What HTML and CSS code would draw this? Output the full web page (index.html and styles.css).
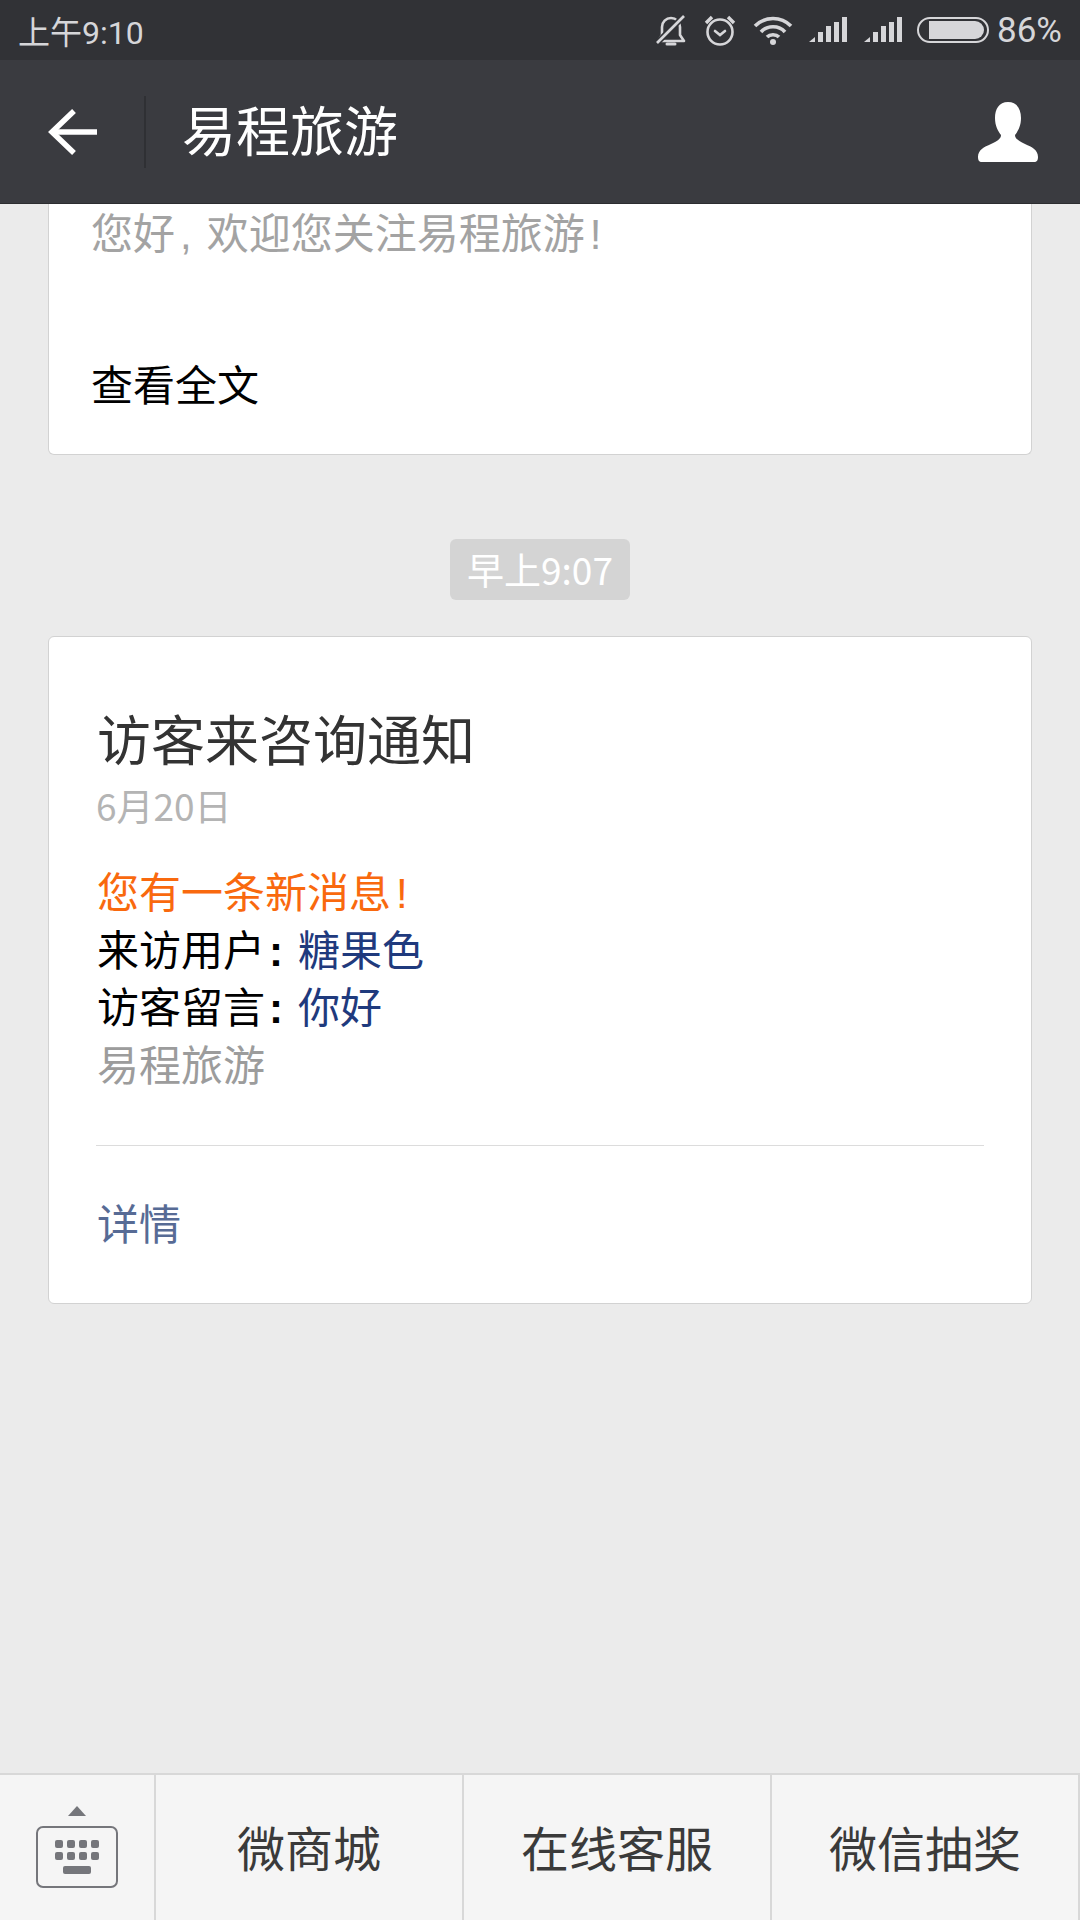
FILE: index.html
```html
<!DOCTYPE html>
<html lang="zh-CN">
<head>
    <meta charset="UTF-8">
    <title>易程旅游</title>
    <link rel="stylesheet" href="styles.css">
</head>
<body>
    <div class="status-bar">
        <span class="status-time">上午9:10</span>
        <div class="status-icons">
            <svg class="icon-bell" width="32" height="32" viewBox="0 0 32 32" fill="none" stroke="#d6d6d9" stroke-width="2.6">
                <path d="M3 27H29L25 21V13C25 8 21 4 16 4C11 4 7 8 7 13V21Z" stroke-linejoin="round"/>
                <path d="M12 30H20" stroke-width="3" stroke-linecap="round"/>
                <path d="M2 29L29 2" stroke="#313236" stroke-width="6"/>
                <path d="M2 29L29 2"/>
            </svg>
            <svg class="icon-alarm" width="32" height="32" viewBox="0 0 32 32" fill="none" stroke="#d6d6d9" stroke-width="2.6">
                <circle cx="16" cy="18" r="12.5"/>
                <path d="M11 17L16 21L21 17" stroke-linecap="round"/>
                <path d="M2 9L8 3M30 9L24 3" stroke-width="3.4"/>
            </svg>
            <svg class="icon-wifi" width="40" height="30" viewBox="0 0 40 30" fill="none" stroke="#d6d6d9" stroke-width="3.6">
                <path d="M2 11C12 1 28 1 38 11"/>
                <path d="M8 17C14 10 26 10 32 17"/>
                <path d="M14 22C17 19 23 19 26 22"/>
                <circle cx="20" cy="27" r="3" fill="#d6d6d9" stroke="none"/>
            </svg>
            <svg class="icon-signal" width="38" height="26" viewBox="0 0 38 26" fill="#d6d6d9">
                <path d="M0 25L6 20V25Z"/>
                <rect x="9" y="15" width="5" height="10"/>
                <rect x="17" y="9" width="5" height="16"/>
                <rect x="25" y="5" width="5" height="20"/>
                <rect x="33" y="0" width="5" height="25"/>
            </svg>
            <svg class="icon-signal" width="38" height="26" viewBox="0 0 38 26" fill="#d6d6d9">
                <path d="M0 25L6 20V25Z"/>
                <rect x="9" y="15" width="5" height="10"/>
                <rect x="17" y="9" width="5" height="16"/>
                <rect x="25" y="5" width="5" height="20"/>
                <rect x="33" y="0" width="5" height="25"/>
            </svg>
            <div class="battery"><div class="battery-fill"></div></div>
            <span class="status-pct">86%</span>
        </div>
    </div>

    <div class="nav-bar">
        <svg class="nav-back" width="50" height="48" viewBox="0 0 50 48" fill="none" stroke="#fff" stroke-width="5.5">
            <path d="M49 24H4"/>
            <path d="M26 3L4 24L26 45"/>
        </svg>
        <div class="nav-sep"></div>
        <div class="nav-title">易程旅游</div>
        <svg class="nav-user" width="62" height="60" viewBox="0 0 62 60" fill="#fff">
            <path d="M31 0C40 0 44 7 44 16C44 24 41 29 38 33C38 37 42 39 48 42C55 45 61 48 61 55C61 58 60 60 57 60H5C2 60 1 58 1 55C1 48 7 45 14 42C20 39 24 37 24 33C21 29 18 24 18 16C18 7 22 0 31 0Z"/>
        </svg>
    </div>

    <div class="chat">
        <div class="card card-top">
            <p class="top-greeting">您好<span class="comma">,</span>欢迎您关注易程旅游<span class="bang">!</span></p>
            <p class="top-more">查看全文</p>
        </div>

        <div class="time-row"><span class="time-pill">早上9:07</span></div>

        <div class="card card-notice">
            <h2 class="notice-title">访客来咨询通知</h2>
            <div class="notice-date">6月20日</div>
            <div class="notice-body">
                <div class="line-orange">您有一条新消息<span class="bang">!</span></div>
                <div>来访用户<span class="colon">:</span><span class="line-blue">糖果色</span></div>
                <div>访客留言<span class="colon">:</span><span class="line-blue">你好</span></div>
                <div class="line-grey">易程旅游</div>
            </div>
            <div class="notice-link">详情</div>
        </div>
    </div>

    <div class="menu-bar">
        <div class="menu-keyboard">
            <svg width="84" height="86" viewBox="0 0 84 86" fill="#75767b">
                <path d="M33 12L42 2L51 12Z"/>
                <rect x="2" y="23" width="80" height="60" rx="6" fill="none" stroke="#75767b" stroke-width="2"/>
                <rect x="20" y="36" width="8" height="8" rx="2"/>
                <rect x="32" y="36" width="8" height="8" rx="2"/>
                <rect x="44" y="36" width="8" height="8" rx="2"/>
                <rect x="56" y="36" width="8" height="8" rx="2"/>
                <rect x="20" y="48" width="8" height="8" rx="2"/>
                <rect x="32" y="48" width="8" height="8" rx="2"/>
                <rect x="44" y="48" width="8" height="8" rx="2"/>
                <rect x="56" y="48" width="8" height="8" rx="2"/>
                <rect x="28" y="62" width="28" height="8" rx="2"/>
            </svg>
        </div>
        <div class="menu-item">微商城</div>
        <div class="menu-item">在线客服</div>
        <div class="menu-item">微信抽奖</div>
    </div>
</body>
</html>
```

FILE: styles.css
```css
html, body {
    margin: 0;
    padding: 0;
}
body {
    width: 1080px;
    height: 1920px;
    display: flex;
    flex-direction: column;
    overflow: hidden;
    background-color: #ebebeb;
    font-family: "Noto Sans CJK SC", "Roboto", sans-serif;
}

/* status bar */
.status-bar {
    height: 60px;
    flex: none;
    display: flex;
    justify-content: space-between;
    align-items: center;
    padding: 0 18px;
    background-color: #313236;
    color: #d6d6d9;
}
.status-time {
    font-family: "Roboto", "Noto Sans CJK SC", sans-serif;
    font-size: 32px;
}
.status-pct {
    font-family: "Roboto", sans-serif;
    font-size: 35px;
}
.status-icons {
    display: flex;
    align-items: center;
}
.icon-bell {
    margin-right: 17px;
}
.icon-alarm {
    margin-right: 17px;
}
.icon-wifi {
    margin-right: 16px;
}
.icon-signal {
    margin-right: 17px;
}
.battery {
    width: 72px;
    height: 26px;
    box-sizing: border-box;
    border: 2px solid #d6d6d9;
    border-radius: 13px;
    padding: 2px 3px 2px 10px;
    margin-left: -2px;
    margin-right: 8px;
}
.battery-fill {
    height: 100%;
    background-color: #d6d6d9;
    border-radius: 0 9px 9px 0;
}

/* title bar */
.nav-bar {
    height: 144px;
    flex: none;
    box-sizing: border-box;
    display: flex;
    align-items: center;
    padding-left: 48px;
    background-color: #3a3b40;
    border-bottom: 1px solid #2c2d30;
}
.nav-sep {
    width: 2px;
    height: 72px;
    margin-left: 46px;
    background-color: #2f3034;
}
.nav-title {
    flex: 1;
    margin-left: 36px;
    padding-bottom: 6px;
    color: #fff;
    font-size: 54px;
    line-height: 54px;
}
.nav-user {
    margin-right: 41px;
}

/* chat cards */
.chat {
    flex: 1;
    padding: 0 48px;
}
.card {
    box-sizing: border-box;
    width: 984px;
    background-color: #fff;
    border: 1px solid #d2d2d2;
    border-radius: 6px;
}
.card-top {
    height: 251px;
    border-top: none;
    border-radius: 0 0 6px 6px;
    padding-top: 1px;
    padding-left: 42px;
    font-size: 42px;
}
.card-top p {
    margin: 0;
}
.top-greeting {
    height: 52px;
    color: #a3a3a3;
    line-height: 52px;
}
.top-more {
    margin-top: 100px !important;
    color: #000;
    line-height: 52px;
}
.comma, .bang, .colon {
    font-family: "Liberation Sans", sans-serif;
}
.comma {
    margin: 0 15px 0 5px;
}
.bang {
    margin-left: 5px;
}
.colon {
    display: inline-block;
    width: 33px;
    padding-left: 4px;
    box-sizing: border-box;
    font-weight: 700;
}
.time-row {
    display: flex;
    justify-content: center;
    margin-top: 84px;
}
.time-pill {
    height: 61px;
    padding: 0 17px;
    line-height: 61px;
    border-radius: 6px;
    background-color: #d4d4d4;
    color: #fff;
    font-size: 37px;
}
.card-notice {
    height: 668px;
    margin-top: 36px;
    padding: 68px 47px 0;
}
.notice-title {
    margin: 0;
    color: #333;
    font-size: 54px;
    font-weight: 400;
    line-height: 66px;
    padding-left: 1px;
}
.notice-date {
    margin-top: 9px;
    color: #b4b4b4;
    font-size: 37px;
    line-height: 50px;
}
.notice-body {
    margin-top: 31px;
    padding-bottom: 54px;
    border-bottom: 1px solid #dcdcdc;
    color: #000;
    font-size: 42px;
    line-height: 57.6px;
}
.notice-body > div {
    height: 57.6px;
    padding-left: 1px;
}
.line-orange {
    color: #f9690e;
}
.line-blue {
    color: #1f3a7d;
}
.line-grey {
    color: #9c9c9c;
}
.notice-link {
    margin-top: 46px;
    padding-left: 1px;
    color: #576b95;
    font-size: 42px;
    line-height: 60px;
}

/* bottom menu */
.menu-bar {
    height: 147px;
    flex: none;
    box-sizing: border-box;
    display: flex;
    background-color: #f5f5f5;
    border-top: 2px solid #d8d8d8;
}
.menu-keyboard {
    width: 154px;
    flex: none;
    display: flex;
    justify-content: center;
    padding-top: 29px;
    box-sizing: border-box;
}
.menu-item {
    width: 308px;
    box-sizing: border-box;
    display: flex;
    align-items: center;
    justify-content: center;
    padding-bottom: 4px;
    border-left: 2px solid #d8d8d8;
    color: #3a3a3a;
    font-size: 48px;
}
.menu-item:last-child {
    width: 310px;
    border-right: 2px solid #d8d8d8;
}
```
